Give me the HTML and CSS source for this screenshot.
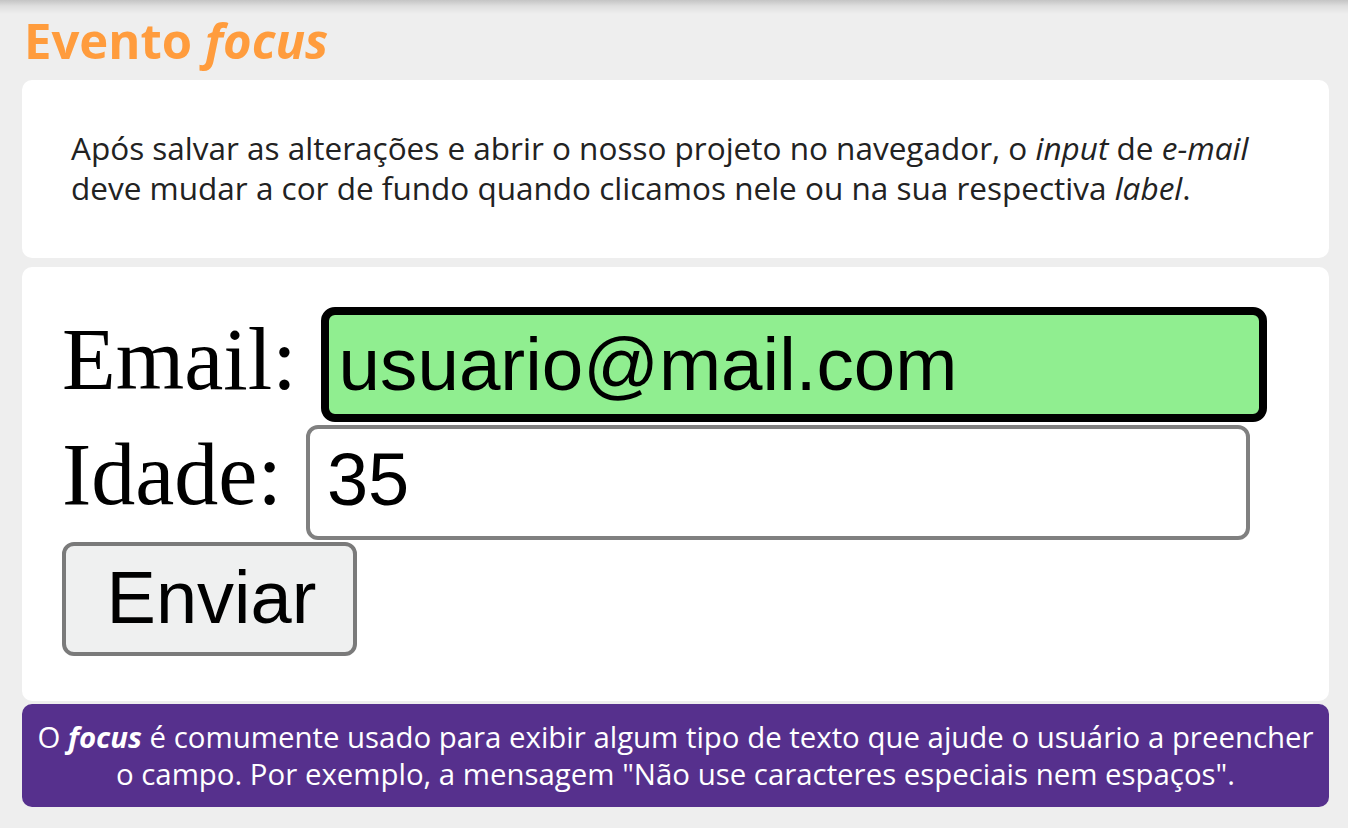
FILE: index.html
```html
<!DOCTYPE html>
<html lang="pt-BR">
<head>
<meta charset="utf-8">
<title>Evento focus</title>
<link rel="stylesheet" href="styles.css">
</head>
<body>
<main class="page">
  <h1 class="title">Evento <em>focus</em></h1>
  <section class="card intro">
    <p>Após salvar as alterações e abrir o nosso projeto no navegador, o <em>input</em> de <em>e-mail</em> deve mudar a cor de fundo quando clicamos nele ou na sua respectiva <em>label</em>.</p>
  </section>
  <section class="card demo">
    <div class="row row-email">
      <label class="lbl" for="email">Email:</label>
      <input class="field field-focus" id="email" type="text" value="usuario@mail.com">
    </div>
    <div class="row row-age">
      <label class="lbl" for="idade">Idade:</label>
      <input class="field field-normal" id="idade" type="text" value="35">
    </div>
    <div class="row row-btn">
      <button class="btn" type="button">Enviar</button>
    </div>
  </section>
  <aside class="note">
    <p>O <strong><em>focus</em></strong> é comumente usado para exibir algum tipo de texto que ajude o usuário a preencher o campo. Por exemplo, a mensagem "Não use caracteres especiais nem espaços".</p>
  </aside>
</main>
</body>
</html>
```

FILE: styles.css
```css
* { box-sizing: border-box; }

html, body {
  margin: 0;
  padding: 0;
}

body {
  background: #eeeeee linear-gradient(#c4c4c4 0, #dedede 6px, #eeeeee 14px) no-repeat;
  background-size: 100% 14px;
  font-family: "Open Sans", "Noto Sans", sans-serif;
  color: #222;
  min-height: 828px;
}

.page {
  padding: 0 19px 0 22px;
}

.title {
  margin: 0;
  padding: 0 0 0 2px;
  height: 80px;
  line-height: 80px;
  font-size: 49px;
  font-weight: 700;
  color: #ff9c3d;
}

.title em {
  font-style: italic;
}

.card {
  background: #ffffff;
  border-radius: 10px;
}

.intro {
  padding: 48px 49px 0 49px;
  height: 178px;
}

.intro p {
  margin: 0;
  font-size: 31.5px;
  line-height: 40px;
  color: #222;
}

.demo {
  margin-top: 9px;
  height: 434px;
  padding: 40px 0 0 40px;
  display: flex;
  flex-direction: column;
}

.row {
  display: flex;
  align-items: flex-start;
}

.row-email { height: 115px; }
.row-age { height: 115px; margin-top: 3px; }
.row-btn { height: 114px; margin-top: 2px; }

.lbl {
  font-family: "Liberation Serif", "Times New Roman", serif;
  font-size: 88px;
  line-height: 88px;
  color: #000;
}

.row-email .lbl { margin-top: 9px; }
.row-age .lbl { margin-top: 6px; }

.field {
  font-family: "Liberation Sans", Arial, sans-serif;
  font-size: 74px;
  color: #000;
  height: 115px;
  margin: 0 0 0 24px;
  outline: none;
}

.field-focus {
  width: 946px;
  background: #90ee90;
  border: 8px solid #000;
  border-radius: 14px;
  padding: 0 0 2px 10px;
  font-size: 74.6px;
}

.field-normal {
  width: 944px;
  background: #fff;
  border: 4px solid #808080;
  border-radius: 12px;
  padding: 0 0 6px 17px;
}

.btn {
  width: 295px;
  height: 114px;
  background: #eff0f0;
  border: 4px solid #7a7a7a;
  border-radius: 12px;
  font-family: "Liberation Sans", Arial, sans-serif;
  font-size: 74px;
  color: #000;
  padding: 0 0 4px 4px;
}

.note {
  margin-top: 3px;
  height: 103px;
  background: #56308d;
  border-radius: 10px;
  padding: 15px 10px 0;
  color: #fff;
  text-align: center;
}

.note p {
  margin: 0;
  font-size: 29.4px;
  line-height: 37px;
}

.note strong {
  font-weight: 700;
}
```
